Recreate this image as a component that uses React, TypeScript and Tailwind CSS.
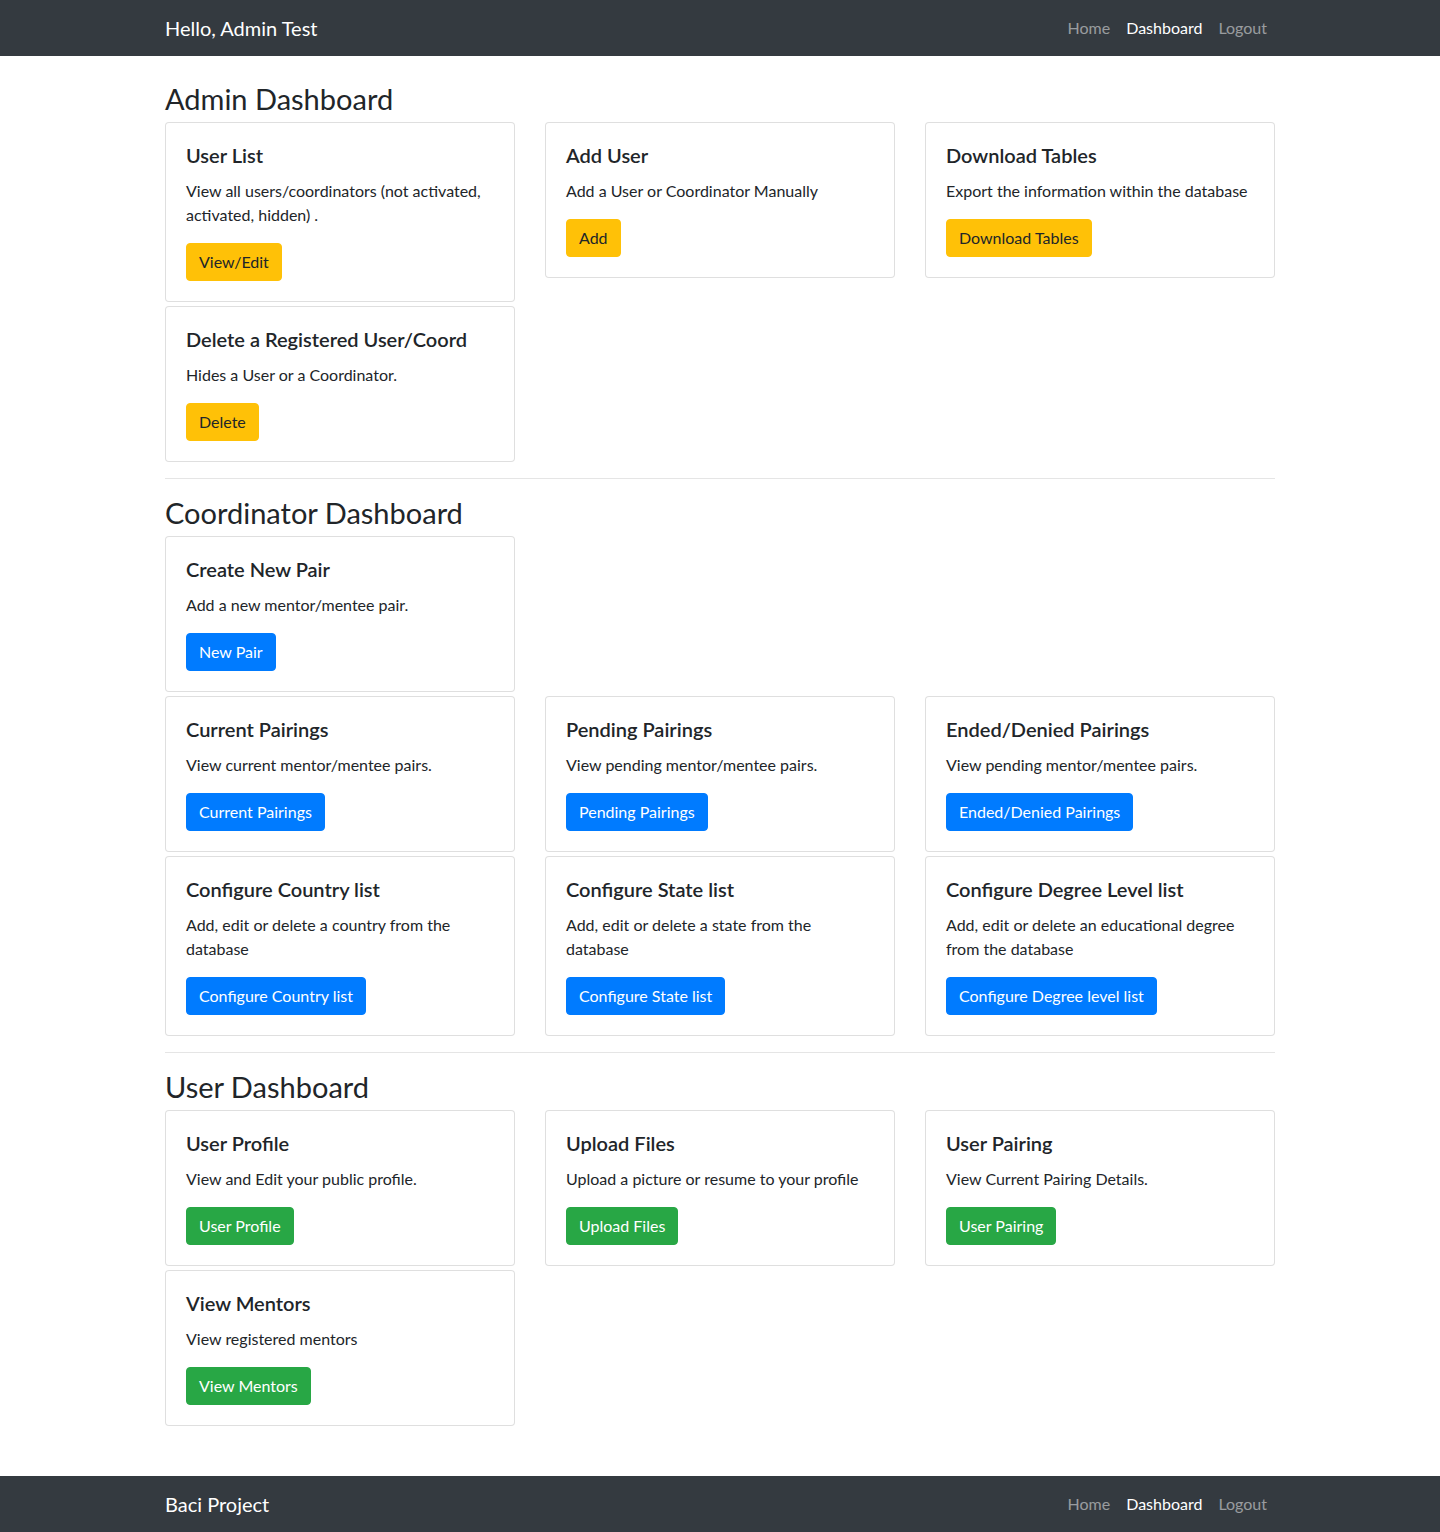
type Variant = "warning" | "primary" | "success";

interface CardItem {
  title: string;
  text: string;
  button: string;
  variant: Variant;
}

const BTN: Record<Variant, string> = {
  warning: "bg-[#ffc107] border-[#ffc107] text-[#212529]",
  primary: "bg-[#007bff] border-[#007bff] text-white",
  success: "bg-[#28a745] border-[#28a745] text-white",
};

const SECTIONS: { heading: string; rows: CardItem[][] }[] = [
  {
    heading: "Admin Dashboard",
    rows: [
      [
        {
          title: "User List",
          text: "View all users/coordinators (not activated, activated, hidden) .",
          button: "View/Edit",
          variant: "warning",
        },
        {
          title: "Add User",
          text: "Add a User or Coordinator Manually",
          button: "Add",
          variant: "warning",
        },
        {
          title: "Download Tables",
          text: "Export the information within the database",
          button: "Download Tables",
          variant: "warning",
        },
      ],
      [
        {
          title: "Delete a Registered User/Coord",
          text: "Hides a User or a Coordinator.",
          button: "Delete",
          variant: "warning",
        },
      ],
    ],
  },
  {
    heading: "Coordinator Dashboard",
    rows: [
      [
        {
          title: "Create New Pair",
          text: "Add a new mentor/mentee pair.",
          button: "New Pair",
          variant: "primary",
        },
      ],
      [
        {
          title: "Current Pairings",
          text: "View current mentor/mentee pairs.",
          button: "Current Pairings",
          variant: "primary",
        },
        {
          title: "Pending Pairings",
          text: "View pending mentor/mentee pairs.",
          button: "Pending Pairings",
          variant: "primary",
        },
        {
          title: "Ended/Denied Pairings",
          text: "View pending mentor/mentee pairs.",
          button: "Ended/Denied Pairings",
          variant: "primary",
        },
      ],
      [
        {
          title: "Configure Country list",
          text: "Add, edit or delete a country from the database",
          button: "Configure Country list",
          variant: "primary",
        },
        {
          title: "Configure State list",
          text: "Add, edit or delete a state from the database",
          button: "Configure State list",
          variant: "primary",
        },
        {
          title: "Configure Degree Level list",
          text: "Add, edit or delete an educational degree from the database",
          button: "Configure Degree level list",
          variant: "primary",
        },
      ],
    ],
  },
  {
    heading: "User Dashboard",
    rows: [
      [
        {
          title: "User Profile",
          text: "View and Edit your public profile.",
          button: "User Profile",
          variant: "success",
        },
        {
          title: "Upload Files",
          text: "Upload a picture or resume to your profile",
          button: "Upload Files",
          variant: "success",
        },
        {
          title: "User Pairing",
          text: "View Current Pairing Details.",
          button: "User Pairing",
          variant: "success",
        },
      ],
      [
        {
          title: "View Mentors",
          text: "View registered mentors",
          button: "View Mentors",
          variant: "success",
        },
      ],
    ],
  },
];

function NavBar({ brand }: { brand: string }) {
  return (
    <nav className="bg-[#343a40] h-[56px] flex items-center">
      <div className="w-full max-w-[1140px] mx-auto px-[15px] flex items-center justify-between">
        <a className="text-white text-[20px] leading-[30px] py-[5px]">{brand}</a>
        <ul className="flex items-center text-[16px] leading-[24px]">
          <li className="px-2 py-2 text-white/50">Home</li>
          <li className="px-2 py-2 text-white">Dashboard</li>
          <li className="px-2 py-2 text-white/50">Logout</li>
        </ul>
      </div>
    </nav>
  );
}

function DashCard({ item }: { item: CardItem }) {
  return (
    <div className="mt-1 border border-black/[0.125] rounded-[4px] bg-white">
      <div className="p-5">
        <h5 className="text-[20px] leading-[24px] font-semibold mb-3">{item.title}</h5>
        <p className="text-[16px] leading-[24px] mb-4">{item.text}</p>
        <button
          className={`inline-block border rounded-[4px] px-3 py-[6px] text-[16px] leading-[24px] ${BTN[item.variant]}`}
        >
          {item.button}
        </button>
      </div>
    </div>
  );
}

export default function App() {
  return (
    <div
      className="min-h-[1532px] flex flex-col bg-white text-[#212529]"
      style={{ fontFamily: '"Segoe UI", Lato, "Open Sans", sans-serif' }}
    >
      <NavBar brand="Hello, Admin Test" />

      <main className="w-full max-w-[1140px] mx-auto px-[15px] mt-6 mb-[50px] flex-1">
        {SECTIONS.map((section, i) => (
          <section key={section.heading}>
            {i > 0 && <hr className="mt-4 mb-[15px] border-0 border-t border-black/10" />}
            <h2 className="text-[29px] leading-[38px] font-normal">{section.heading}</h2>
            {section.rows.map((row, r) => (
              <div key={r} className="grid grid-cols-3 gap-x-[30px] items-start">
                {row.map((item) => (
                  <DashCard key={item.title} item={item} />
                ))}
              </div>
            ))}
          </section>
        ))}
      </main>

      <NavBar brand="Baci Project" />
    </div>
  );
}
